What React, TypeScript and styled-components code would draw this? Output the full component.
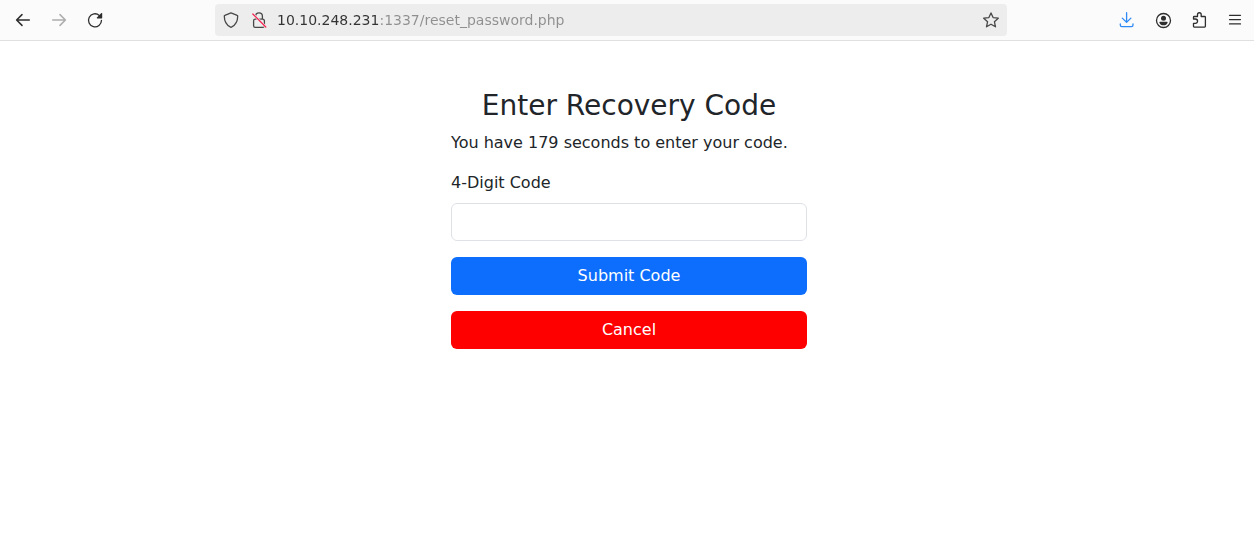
import React from "react";
import styled, { createGlobalStyle } from "styled-components";

const GlobalStyle = createGlobalStyle`
  *, *::before, *::after { box-sizing: border-box; }
  body {
    margin: 0;
    background: #fff;
    color: #212529;
    font-family: "DejaVu Sans", sans-serif;
    font-size: 16px;
    line-height: 24px;
  }
`;

const Toolbar = styled.header`
  display: flex;
  align-items: center;
  padding: 4px 3px 4px 7px;
  background: #fbfbfb;
  border-bottom: 1px solid #e0e0e0;
`;

const ButtonGroup = styled.div`
  display: flex;
  gap: 4px;
`;

const ToolButton = styled.button<{ $color?: string }>`
  display: flex;
  align-items: center;
  justify-content: center;
  width: 32px;
  height: 32px;
  padding: 0;
  border: 0;
  border-radius: 4px;
  background: transparent;
  color: ${({ $color }) => $color ?? "#2e2e2e"};
`;

const Spring = styled.div`
  flex: 13 1 0;
`;

const AddressBar = styled.div`
  display: flex;
  flex: 99 1 0;
  align-items: center;
  min-width: 0;
  border-radius: 4px;
  background: #ededed;
`;

const SiteButton = styled(ToolButton)`
  width: 28px;

  &:first-child {
    margin-left: 2px;
  }
`;

/* The host is shown dark, the port and path after it grey. */
const Address = styled.input`
  flex: 1;
  min-width: 0;
  height: 32px;
  margin-left: 4px;
  padding: 0;
  border: 0;
  outline: 0;
  background: linear-gradient(to right, #333 102px, #8f8f8f 102px);
  background-clip: text;
  -webkit-background-clip: text;
  color: #333;
  -webkit-text-fill-color: transparent;
  font: 14px "DejaVu Sans", sans-serif;
`;

const Page = styled.main`
  display: flex;
  justify-content: center;
  padding: 48px 0 48px 4px;
`;

const Column = styled.section`
  width: 100%;
  max-width: 380px;
  padding: 0 12px;
`;

const Title = styled.h1`
  margin: 0 0 8px;
  font-size: 28px;
  font-weight: 400;
  line-height: 34px;
  text-align: center;
`;

const Message = styled.p`
  margin: 0 0 16px;
`;

const Form = styled.form`
  display: flex;
  flex-direction: column;
  gap: 16px;
`;

const Field = styled.div`
  display: flex;
  flex-direction: column;
  gap: 8px;
`;

const TextBox = styled.input`
  width: 100%;
  height: 38px;
  padding: 6px 12px;
  border: 1px solid #dee2e6;
  border-radius: 6px;
  background: #fff;
  color: inherit;
  font: inherit;
`;

const ActionButton = styled.button<{ $tone: string }>`
  width: 100%;
  height: 38px;
  padding: 6px 12px;
  border: 0;
  border-radius: 6px;
  background: ${({ $tone }) => $tone};
  color: #fff;
  font: inherit;
`;

const Svg = styled.svg`
  display: block;
  width: 16px;
  height: 16px;
  fill: none;
  stroke: currentColor;
  stroke-width: 1.3;
  stroke-linecap: round;
  stroke-linejoin: round;
  overflow: visible;
`;

function Icon({ children }: { children: React.ReactNode }) {
  return (
    <Svg viewBox="0 0 16 16" aria-hidden="true">
      {children}
    </Svg>
  );
}

export default function App() {
  return (
    <>
      <GlobalStyle />
      <Toolbar>
        <ButtonGroup>
          <ToolButton type="button" aria-label="Back">
            <Icon>
              <path strokeWidth="1.5" d="M14.3 8H1.8M7 2.6 1.6 8 7 13.4" />
            </Icon>
          </ToolButton>
          <ToolButton type="button" aria-label="Forward" disabled $color="#adadad">
            <Icon>
              <path strokeWidth="1.5" d="M1.7 8h12.5M9 2.6 14.4 8 9 13.4" />
            </Icon>
          </ToolButton>
          <ToolButton type="button" aria-label="Reload">
            <Icon>
              <path strokeWidth="1.3" d="M14.5 8.300A6.500 6.500 0 1 1 12.300 3.400" />
              <path fill="currentColor" stroke="none" d="M15.200 1.400v4.500c0 .3-.2.500-.5.500h-4.500c-.4 0-.6-.5-.3-.8l4.500-4.500c.3-.3.8-.1.8.3Z" />
            </Icon>
          </ToolButton>
        </ButtonGroup>
        <Spring />
        <AddressBar>
          <SiteButton type="button" aria-label="Tracking protection" $color="#484848">
            <Icon>
              <path d="m8 .9 6.2 2.4c.3.1.5.4.5.7 0 4.8-1.700 8.900-6.300 11.200a1 1 0 0 1-.8 0C3 12.900 1.300 8.800 1.300 4c0-.3.2-.6.5-.7Z" />
            </Icon>
          </SiteButton>
          <SiteButton type="button" aria-label="Connection is not secure" $color="#484848">
            <Icon>
              <path d="M4.600 7V4.300a3.400 3.400 0 0 1 6.800 0V7M4.200 7.200h7.600a1.600 1.600 0 0 1 1.600 1.600v4.900a1.600 1.600 0 0 1-1.600 1.600H4.200a1.600 1.600 0 0 1-1.600-1.600V8.800a1.600 1.600 0 0 1 1.600-1.600Z" />
              <path stroke="#ededed" strokeWidth="2.600" d="m2 2.200 12.600 12.600" />
              <path stroke="#f5214f" strokeWidth="1.200" d="m1.800 2 13 13" />
            </Icon>
          </SiteButton>
          <Address
            type="text"
            aria-label="Address"
            spellCheck={false}
            defaultValue="10.10.248.231:1337/reset_password.php"
          />
          <ToolButton type="button" aria-label="Bookmark this page" $color="#484848">
            <Icon>
              <path d="m8 .9 2.100 4.700 5.200.6-3.900 3.500 1.100 5.100L8 12.200l-4.500 2.600 1.100-5.100L.7 6.200l5.200-.6Z" />
            </Icon>
          </ToolButton>
        </AddressBar>
        <Spring />
        <ButtonGroup>
          <ToolButton type="button" aria-label="Downloads" $color="#2f8af5">
            <Icon>
              <path d="M7.600.7v9.500M3.300 6.100l4.300 4.300 4.300-4.300M1.300 12v1.100c0 .9.700 1.600 1.600 1.600h9.500c.9 0 1.600-.7 1.600-1.600V12" />
            </Icon>
          </ToolButton>
          <ToolButton type="button" aria-label="Account">
            <Icon>
              <circle cx="8.500" cy="8.500" r="7" />
              <circle cx="8.500" cy="6.300" r="2.500" fill="currentColor" stroke="none" />
              <path fill="currentColor" stroke="none" d="M5.200 9.800h6.600c.5 0 .9.400.8.900-.5 1.600-2.100 2.600-4.100 2.600s-3.600-1-4.100-2.600c-.1-.5.300-.9.800-.9Z" />
            </Icon>
          </ToolButton>
          <ToolButton type="button" aria-label="Extensions">
            <Icon>
              <path d="M2.500 7V5.300c0-.5.300-.8.800-.8h3.200V2.600a1.850 1.850 0 0 1 3.700 0v1.900h3.400c.5 0 .8.300.8.800v9c0 .5-.3.800-.8.800H3.300c-.5 0-.8-.3-.8-.8v-3h1.900a1.900 1.900 0 0 0 0-4.300Z" />
            </Icon>
          </ToolButton>
          <ToolButton type="button" aria-label="Menu">
            <Icon>
              <path strokeWidth="1.200" d="M2.500 3.300h11M2.500 7.600h11M2.500 11.900h11" />
            </Icon>
          </ToolButton>
        </ButtonGroup>
      </Toolbar>
      <Page>
        <Column>
          <Title>Enter Recovery Code</Title>
          <Message>You have 179 seconds to enter your code.</Message>
          <Form onSubmit={(event) => event.preventDefault()}>
            <Field>
              <label htmlFor="recovery-code">4-Digit Code</label>
              <TextBox id="recovery-code" type="text" inputMode="numeric" maxLength={4} />
            </Field>
            <ActionButton type="submit" $tone="#0d6efd">
              Submit Code
            </ActionButton>
            <ActionButton type="button" $tone="#ff0000">
              Cancel
            </ActionButton>
          </Form>
        </Column>
      </Page>
    </>
  );
}
